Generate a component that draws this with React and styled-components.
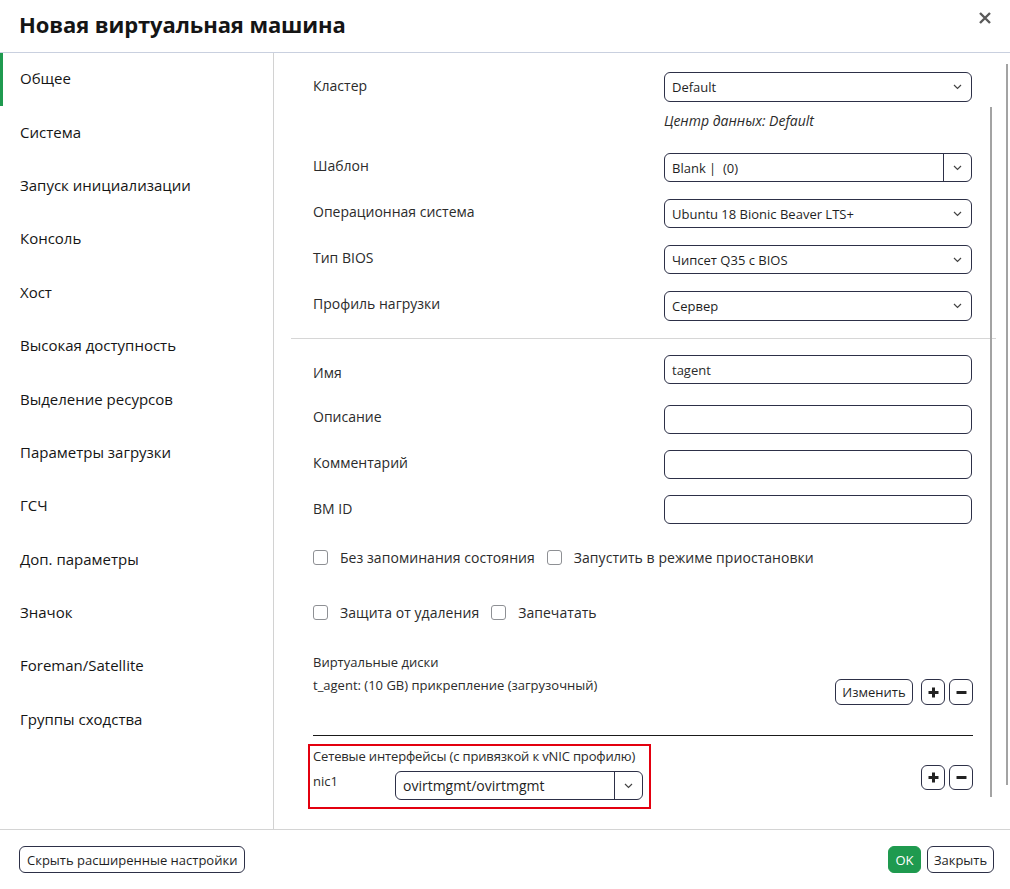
import React from 'react';
import styled, { createGlobalStyle } from 'styled-components';

const GlobalStyle = createGlobalStyle`
  html, body {
    margin: 0;
    padding: 0;
    background: #fff;
  }
  body {
    font-family: "Open Sans", "Noto Sans", sans-serif;
    color: #1f1f1f;
  }
`;

const Dialog = styled.div`
  width: 1010px;
  height: 889px;
  display: flex;
  flex-direction: column;
  background: #fff;
  position: relative;
  overflow: hidden;
`;

const Header = styled.div`
  height: 52px;
  flex-shrink: 0;
  border-bottom: 1px solid #c9d0df;
  display: flex;
  justify-content: space-between;
  align-items: flex-start;
  padding: 0 17px 0 19px;
`;

const Title = styled.h1`
  margin: 9px 0 0;
  font-size: 22px;
  font-weight: 700;
  color: #151515;
  letter-spacing: -0.1px;
`;

const Close = styled.button`
  border: none;
  background: none;
  padding: 0;
  margin-top: 11px;
  width: 16px;
  height: 16px;
  cursor: pointer;
`;

const Body = styled.div`
  display: flex;
  flex: 1;
  min-height: 0;
`;

const Sidebar = styled.nav`
  width: 273px;
  flex-shrink: 0;
  border-right: 1px solid #d2d2d2;
`;

const NavItem = styled.div`
  height: 53.4px;
  display: flex;
  align-items: center;
  padding: 0 0 3px 17px;
  box-sizing: border-box;
  font-size: 15px;
  color: #151515;
  border-left: 3px solid ${p => (p.$active ? '#1f9a4f' : 'transparent')};
`;

const Content = styled.div`
  flex: 1;
  position: relative;
  padding: 19px 37px 0 39px;
  font-size: 14px;
  color: #2b2b2b;
`;

const Row = styled.div`
  display: grid;
  grid-template-columns: 351px 308px;
  align-items: ${p => p.$align || 'center'};
  margin-top: ${p => p.$top || 0}px;
`;

const Label = styled.div`
  font-size: 14px;
  color: #2b2b2b;
  transform: translateY(${p => p.$shift || 0}px);
`;

const Select = styled.div`
  height: ${p => p.$h || 30}px;
  box-sizing: border-box;
  border: 1px solid #2d3047;
  border-radius: 6px;
  display: flex;
  align-items: center;
  font-size: ${p => p.$fs || 13}px;
  color: #1f1f1f;
  overflow: hidden;
  width: ${p => (p.$w ? `${p.$w}px` : 'auto')};
`;

const SelectText = styled.span`
  flex: 1;
  padding-left: 7px;
  white-space: pre;
`;

const Chevron = styled.span`
  width: 27px;
  align-self: stretch;
  display: flex;
  align-items: center;
  justify-content: center;
  border-left: ${p => (p.$split ? '1px solid #2d3047' : 'none')};
`;

const Hint = styled.div`
  grid-column: 2;
  font-style: italic;
  font-size: 14px;
  color: #2b2b2b;
  margin-top: 9px;
  line-height: 20px;
`;

const Divider = styled.hr`
  border: none;
  border-top: 1px solid #d6d6d6;
  margin: 17px -23px 0 -22px;
`;

const Input = styled.div`
  height: 29px;
  box-sizing: border-box;
  border: 1px solid #2d3047;
  border-radius: 6px;
  display: flex;
  align-items: center;
  padding-left: 7px;
  font-size: 13px;
`;

const CheckRow = styled.div`
  display: flex;
  align-items: center;
  margin-top: ${p => p.$top}px;
  height: 20px;
`;

const Check = styled.label`
  display: flex;
  align-items: center;
  gap: 12px;
  margin-right: 12px;
  font-size: 14px;
  letter-spacing: 0.05px;
  color: #2b2b2b;
`;

const Box = styled.span`
  width: 13px;
  height: 13px;
  border: 1px solid #8e9094;
  border-radius: 3px;
  display: inline-block;
`;

const SmallLabel = styled.div`
  font-size: 13px;
  color: #2b2b2b;
  margin-top: ${p => p.$top || 0}px;
  line-height: 18px;
  white-space: nowrap;
  letter-spacing: ${p => (p.$tight ? '-0.15px' : '0')};
`;

const DiskRow = styled.div`
  display: flex;
  justify-content: space-between;
  align-items: flex-start;
  margin-top: 5px;
`;

const Buttons = styled.div`
  display: flex;
  gap: 4px;
  margin-top: ${p => p.$top || 0}px;
`;

const Btn = styled.button`
  height: ${p => p.$h || 26}px;
  box-sizing: border-box;
  border: 1px solid #2d3047;
  border-radius: 6px;
  background: #fff;
  font-family: inherit;
  font-size: 13px;
  color: #1f1f1f;
  padding: 0 ${p => (p.$icon ? 0 : 7)}px;
  width: ${p => (p.$w ? `${p.$w}px` : 'auto')};
  display: flex;
  align-items: center;
  justify-content: center;
  margin-left: ${p => p.$ml || 0}px;
`;

const BlackLine = styled.div`
  height: 1px;
  background: #1a1a1a;
  margin-top: 30px;
`;

const NicSection = styled.div`
  display: flex;
  justify-content: space-between;
  align-items: flex-start;
  margin-top: 8px;
`;

const Highlight = styled.div`
  border: 2px solid #e3000f;
  margin-left: -5px;
  padding: 1px 6px 7px 3px;
  width: 343px;
  box-sizing: border-box;
`;

const NicRow = styled.div`
  display: flex;
  align-items: flex-start;
  margin-top: 6px;
`;

const NicName = styled.span`
  width: 82px;
  font-size: 13px;
  color: #2b2b2b;
  padding-top: 1px;
`;

const Scroll = styled.div`
  position: absolute;
  width: 2px;
  background: #a3a3a3;
  left: ${p => p.$x}px;
  top: ${p => p.$top}px;
  height: ${p => p.$h}px;
`;

const Footer = styled.div`
  height: 59px;
  flex-shrink: 0;
  border-top: 1px solid #d4d4d4;
  display: flex;
  align-items: center;
  justify-content: space-between;
  padding: 0 16px 0 19px;
`;

const FooterGroup = styled.div`
  display: flex;
  gap: 6px;
`;

const OkBtn = styled(Btn)`
  background: #1f9a4f;
  border-color: #1f9a4f;
  color: #fff;
`;

const ChevronIcon = () => (
  <svg width="9" height="6" viewBox="0 0 9 6">
    <polyline points="1,1 4.5,4.5 8,1" fill="none" stroke="#444" strokeWidth="1.2" />
  </svg>
);

const Plus = () => (
  <svg width="11" height="11" viewBox="0 0 11 11">
    <rect x="4" y="0.5" width="3" height="10" fill="#222" />
    <rect x="0.5" y="4" width="10" height="3" fill="#222" />
  </svg>
);

const Minus = () => (
  <svg width="11" height="11" viewBox="0 0 11 11">
    <rect x="0.5" y="4" width="10" height="3" rx="0.5" fill="#222" />
  </svg>
);

const SelectField = ({ value, split, h, w, fs }) => (
  <Select $h={h} $w={w} $fs={fs}>
    <SelectText>{value}</SelectText>
    <Chevron $split={split}>
      <ChevronIcon />
    </Chevron>
  </Select>
);

const nav = [
  'Общее',
  'Система',
  'Запуск инициализации',
  'Консоль',
  'Хост',
  'Высокая доступность',
  'Выделение ресурсов',
  'Параметры загрузки',
  'ГСЧ',
  'Доп. параметры',
  'Значок',
  'Foreman/Satellite',
  'Группы сходства',
];

export default function App() {
  return (
    <>
      <GlobalStyle />
      <Dialog>
        <Header>
          <Title>Новая виртуальная машина</Title>
          <Close aria-label="Закрыть">
            <svg width="14" height="14" viewBox="0 0 14 14">
              <path d="M2 2 L12 12 M12 2 L2 12" stroke="#5a5a5a" strokeWidth="2.4" />
            </svg>
          </Close>
        </Header>
        <Body>
          <Sidebar>
            {nav.map((n, i) => (
              <NavItem key={n} $active={i === 0}>
                {n}
              </NavItem>
            ))}
          </Sidebar>
          <Content>
            <Row $align="start">
              <Label $shift={4}>Кластер</Label>
              <SelectField value="Default" />
              <Hint>Центр данных: Default</Hint>
            </Row>
            <Row $top={22}>
              <Label $shift={-2}>Шаблон</Label>
              <SelectField value="Blank |  (0)" split h={29} />
            </Row>
            <Row $top={17}>
              <Label $shift={-2}>Операционная система</Label>
              <SelectField value="Ubuntu 18 Bionic Beaver LTS+" h={29} />
            </Row>
            <Row $top={17}>
              <Label $shift={-2}>Тип BIOS</Label>
              <SelectField value="Чипсет Q35 с BIOS" h={29} />
            </Row>
            <Row $top={17}>
              <Label $shift={-3}>Профиль нагрузки</Label>
              <SelectField value="Сервер" h={30} />
            </Row>
            <Divider />
            <Row $top={16}>
              <Label $shift={3}>Имя</Label>
              <Input>tagent</Input>
            </Row>
            <Row $top={21}>
              <Label $shift={-3}>Описание</Label>
              <Input />
            </Row>
            <Row $top={16}>
              <Label $shift={-2}>Комментарий</Label>
              <Input />
            </Row>
            <Row $top={16}>
              <Label $shift={-1}>ВМ ID</Label>
              <Input />
            </Row>
            <CheckRow $top={23}>
              <Check>
                <Box />
                Без запоминания состояния
              </Check>
              <Check>
                <Box />
                Запустить в режиме приостановки
              </Check>
            </CheckRow>
            <CheckRow $top={35}>
              <Check>
                <Box />
                Защита от удаления
              </Check>
              <Check>
                <Box />
                Запечатать
              </Check>
            </CheckRow>
            <SmallLabel $top={31}>Виртуальные диски</SmallLabel>
            <DiskRow>
              <SmallLabel>t_agent: (10 GB) прикрепление (загрузочный)</SmallLabel>
              <Buttons $top={3}>
                <Btn $w={78}>Изменить</Btn>
                <Btn $w={24} $icon $ml={4}>
                  <Plus />
                </Btn>
                <Btn $w={24} $icon>
                  <Minus />
                </Btn>
              </Buttons>
            </DiskRow>
            <BlackLine />
            <NicSection>
              <Highlight>
                <SmallLabel $tight>Сетевые интерфейсы (с привязкой к vNIC профилю)</SmallLabel>
                <NicRow>
                  <NicName>nic1</NicName>
                  <SelectField value="ovirtmgmt/ovirtmgmt" split h={29} w={248} fs={14} />
                </NicRow>
              </Highlight>
              <Buttons $top={21}>
                <Btn $w={24} $h={25} $icon>
                  <Plus />
                </Btn>
                <Btn $w={24} $h={25} $icon>
                  <Minus />
                </Btn>
              </Buttons>
            </NicSection>
            <Scroll $x={716} $top={54} $h={690} />
            <Scroll $x={732} $top={11} $h={721} />
          </Content>
        </Body>
        <Footer>
          <Btn $h={27}>Скрыть расширенные настройки</Btn>
          <FooterGroup>
            <OkBtn $h={27} $w={33}>
              OK
            </OkBtn>
            <Btn $h={27} $w={67}>
              Закрыть
            </Btn>
          </FooterGroup>
        </Footer>
      </Dialog>
    </>
  );
}
